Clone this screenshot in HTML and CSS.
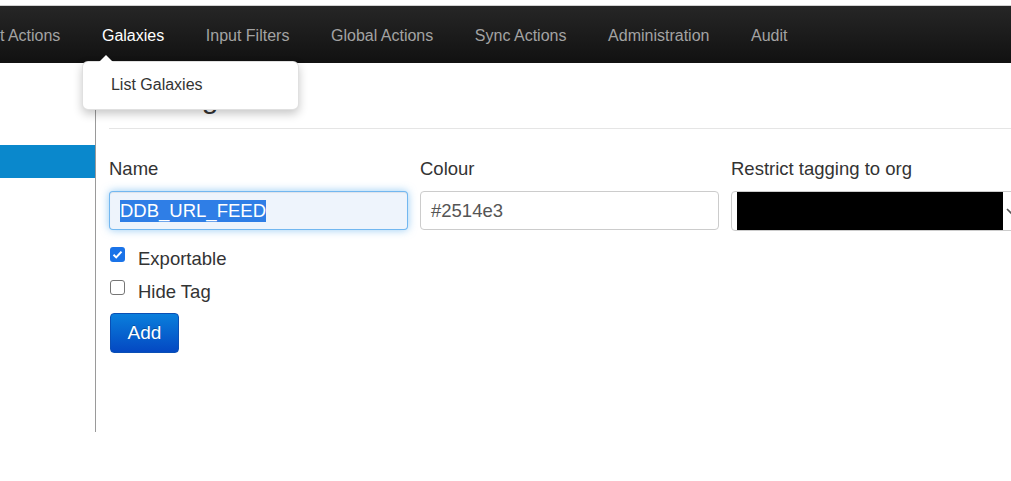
FILE: index.html
```html
<!DOCTYPE html>
<html lang="en">
<head>
<meta charset="utf-8">
<title>Add Tag</title>
<link rel="stylesheet" href="styles.css">
</head>
<body>
<div class="topstrip"></div>
<nav class="navbar">
  <div class="nav-item">Event Actions</div>
  <div class="nav-item active">Galaxies
    <div class="dropdown">
      <div class="dropdown-item">List Galaxies</div>
    </div>
  </div>
  <div class="nav-item">Input Filters</div>
  <div class="nav-item">Global Actions</div>
  <div class="nav-item">Sync Actions</div>
  <div class="nav-item">Administration</div>
  <div class="nav-item">Audit</div>
</nav>
<div class="main">
  <aside class="sidebar">
    <div class="side-active"></div>
  </aside>
  <section class="content">
    <h2 class="legend">Add Tag</h2>
    <div class="fields">
      <div class="field">
        <div class="label">Name</div>
        <div class="input focus"><span class="sel">DDB_URL_FEED</span></div>
      </div>
      <div class="field">
        <div class="label">Colour</div>
        <div class="input">#2514e3</div>
      </div>
      <div class="field">
        <div class="label">Restrict tagging to org</div>
        <div class="select">
          <div class="redact"></div>
          <svg class="chev" width="10" height="8" viewBox="0 0 10 8"><path d="M1 2 L5 6 L9 2" fill="none" stroke="#555" stroke-width="1.6"/></svg>
        </div>
      </div>
    </div>
    <div class="check-row first">
      <span class="cb checked"><svg width="15" height="15" viewBox="0 0 15 15"><path d="M3.5 7.8 L6.2 10.4 L11.5 4.6" fill="none" stroke="#fff" stroke-width="2"/></svg></span>
      <span>Exportable</span>
    </div>
    <div class="check-row">
      <span class="cb"></span>
      <span>Hide Tag</span>
    </div>
    <button class="btn">Add</button>
  </section>
</div>
</body>
</html>
```

FILE: styles.css
```css
html, body {
  margin: 0;
  padding: 0;
}
body {
  width: 1011px;
  height: 481px;
  overflow: hidden;
  background: #fff;
  color: #333;
  font-family: "Liberation Sans", Arial, sans-serif;
}
.topstrip {
  height: 5px;
  border-bottom: 1px solid #d2d2d2;
}
.navbar {
  height: 57px;
  box-sizing: border-box;
  padding-top: 2px;
  margin-left: -36.6px;
  display: flex;
  align-items: center;
  gap: 41.6px;
  background: linear-gradient(#262626, #111);
  font-size: 16px;
  color: #a3a3a3;
  white-space: nowrap;
}
.nav-item {
  position: relative;
  line-height: 18px;
}
.nav-item.active {
  color: #fff;
}
.dropdown {
  position: absolute;
  left: -20px;
  top: 34.5px;
  width: 217px;
  box-sizing: border-box;
  background: #fff;
  border: 1px solid rgba(0, 0, 0, 0.12);
  border-radius: 6px;
  box-shadow: 0 4px 10px rgba(0, 0, 0, 0.22);
  padding: 13px 0 14px;
  z-index: 10;
}
.dropdown::before {
  content: "";
  position: absolute;
  top: -7px;
  left: 16px;
  border-left: 7px solid transparent;
  border-right: 7px solid transparent;
  border-bottom: 7px solid #fff;
}
.dropdown-item {
  padding-left: 28px;
  line-height: 20px;
  font-size: 16px;
  color: #333;
}
.main {
  display: flex;
  height: 369px;
  overflow: hidden;
}
.sidebar {
  width: 95px;
  flex: none;
  border-right: 1px solid #9a9a9a;
  padding-top: 82px;
}
.side-active {
  height: 33px;
  background: #0a88cc;
}
.content {
  flex: 1;
  min-width: 0;
  padding-left: 13px;
}
.legend {
  margin: 17px 0 0;
  font-size: 30px;
  font-weight: normal;
  line-height: 36px;
  padding-bottom: 12px;
  border-bottom: 1px solid #e5e5e5;
  color: #333;
}
.fields {
  display: flex;
  gap: 12px;
  margin-top: 29px;
}
.field {
  width: 299px;
  flex: none;
  display: flex;
  flex-direction: column;
}
.label {
  font-size: 18.5px;
  line-height: 22px;
  margin-bottom: 11px;
  color: #333;
}
.input {
  height: 39px;
  box-sizing: border-box;
  border: 1px solid #ccc;
  border-radius: 4px;
  padding: 0 10px;
  display: flex;
  align-items: center;
  font-size: 18.5px;
  color: #555;
  background: #fff;
}
.input.focus {
  border-color: rgba(82, 168, 236, 0.8);
  box-shadow: inset 0 1px 1px rgba(0, 0, 0, 0.075), 0 0 8px rgba(82, 168, 236, 0.6);
  background: #eef4fc;
}
.sel {
  background: #2f7ee6;
  color: #fff;
}
.select {
  height: 40px;
  box-sizing: border-box;
  border: 1px solid #ccc;
  border-radius: 4px;
  display: flex;
  align-items: center;
  background: #fff;
}
.redact {
  margin-left: 5px;
  width: 266px;
  height: 38px;
  background: #000;
}
.chev {
  margin-left: 3px;
  flex: none;
}
.check-row {
  display: flex;
  align-items: center;
  gap: 13px;
  height: 33px;
  font-size: 18.5px;
  color: #333;
  padding-left: 1px;
}
.check-row.first {
  margin-top: 11px;
}
.cb {
  width: 15px;
  height: 15px;
  box-sizing: border-box;
  border: 1px solid #767676;
  border-radius: 3px;
  margin-bottom: 8px;
  background: #fff;
  display: flex;
}
.cb.checked {
  border: none;
  background: #1a73e8;
}
.btn {
  display: block;
  margin: 5px 0 0 1px;
  width: 69px;
  height: 40px;
  border: 1px solid #0a4fb5;
  border-radius: 4px;
  background: linear-gradient(#0a7fdc, #0448c2);
  color: #fff;
  font-family: "Liberation Sans", Arial, sans-serif;
  font-size: 19px;
  text-shadow: 0 -1px 0 rgba(0, 0, 0, 0.25);
  padding: 0;
}
```
